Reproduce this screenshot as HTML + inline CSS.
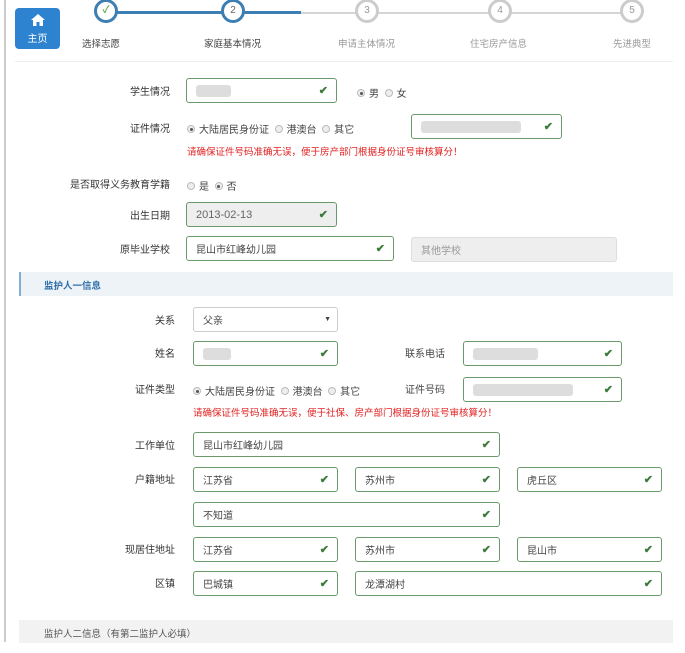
<!DOCTYPE html>
<html><head><meta charset="utf-8"><style>
*{box-sizing:border-box;margin:0;padding:0}
body{width:685px;height:653px;background:#fff;position:relative;overflow:hidden;font-family:"Liberation Sans","Noto Sans CJK SC",sans-serif;font-size:10px;color:#444}
.a{position:absolute;white-space:nowrap}
.lbl{position:absolute;text-align:right;width:150px;font-size:10px;color:#333}
.in{position:absolute;border:1px solid #6a9a6a;border-radius:3px;background:#fff;height:25px;padding-left:9px;display:flex;align-items:center;font-size:10px;color:#444}
.in.g{background:#eee}
.in .ck{position:absolute;right:8px;top:5px;color:#3c7a3c;font-size:11px;font-weight:bold}
.blur{display:inline-block;height:12px;background:#ddd;border-radius:3px}
.rd{display:inline-block;width:8px;height:8px;border:1px solid #bbb;border-radius:50%;background:#eee;vertical-align:middle;margin-right:4px;position:relative;top:-1px}
.rd.on::after{content:"";position:absolute;left:1.5px;top:1.5px;width:3px;height:3px;background:#555;border-radius:50%}
.red{color:#e02020;font-size:9.5px}
.step{position:absolute;width:24px;height:24px;border-radius:50%;border:3px solid #ccc;background:#fff;text-align:center;line-height:18px;font-size:10px;color:#999;top:-1px}
.sl{position:absolute;top:36px;font-size:9.5px;color:#999}
</style></head><body>
<div class="a" style="left:4px;top:0;width:2px;height:642px;background:#ccc"></div>
<div class="a" style="left:15px;top:8px;width:45px;height:41px;background:#2d83cf;border-radius:4px;color:#fff;text-align:center;font-size:10px">
<svg width="14" height="12" viewBox="0 0 14 12" style="margin-top:6px"><path d="M7 0 L14 6 L12 6 L12 12 L8.5 12 L8.5 8 L5.5 8 L5.5 12 L2 12 L2 6 L0 6 Z" fill="#fff"/></svg>
<div style="margin-top:1px">主页</div></div>
<div class="a" style="left:106px;top:11px;width:195px;height:3px;background:#3d7fb3"></div>
<div class="a" style="left:301px;top:12px;width:331px;height:2px;background:#d5d5d5"></div>
<div class="step" style="left:94px;border-color:#3d7fb3;color:#6ab04c;font-weight:bold">✓</div>
<div class="step" style="left:221px;border-color:#3d7fb3;color:#666">2</div>
<div class="step" style="left:355px">3</div>
<div class="step" style="left:488px">4</div>
<div class="step" style="left:620px">5</div>
<div class="sl" style="left:82px;color:#444">选择志愿</div>
<div class="sl" style="left:204px;color:#444">家庭基本情况</div>
<div class="sl" style="left:338px">申请主体情况</div>
<div class="sl" style="left:470px">住宅房产信息</div>
<div class="sl" style="left:613px">先进典型</div>
<div class="a" style="left:15px;top:61px;width:658px;height:1px;background:#eee"></div>

<div class="lbl" style="left:20px;top:83px">学生情况</div>
<div class="in" style="left:186px;top:78px;width:151px"><span class="blur" style="width:35px"></span><span class="ck">✔</span></div>
<div class="a" style="left:357px;top:85px"><span class="rd on"></span>男 &nbsp;<span class="rd"></span>女</div>
<div class="lbl" style="left:20px;top:120px">证件情况</div>
<div class="a" style="left:187px;top:121px"><span class="rd on"></span>大陆居民身份证 &nbsp;<span class="rd"></span>港澳台 &nbsp;<span class="rd"></span>其它</div>
<div class="in" style="left:411px;top:114px;width:151px"><span class="blur" style="width:100px"></span><span class="ck">✔</span></div>
<div class="a red" style="left:187px;top:144px">请确保证件号码准确无误，便于房产部门根据身份证号审核算分！</div>
<div class="lbl" style="left:20px;top:176px">是否取得义务教育学籍</div>
<div class="a" style="left:187px;top:178px"><span class="rd"></span>是 &nbsp;<span class="rd on"></span>否</div>
<div class="lbl" style="left:20px;top:207px">出生日期</div>
<div class="in g" style="left:186px;top:202px;width:151px;font-size:11px;color:#666">2013-02-13<span class="ck">✔</span></div>
<div class="lbl" style="left:20px;top:241px">原毕业学校</div>
<div class="in" style="left:186px;top:236px;width:208px">昆山市红峰幼儿园<span class="ck">✔</span></div>
<div class="in g" style="left:411px;top:237px;width:206px;border-color:#ddd;color:#999">其他学校</div>

<div class="a" style="left:19px;top:272px;width:654px;height:24px;background:#eef3f7;border-left:2px solid #7fb0d8"></div>
<div class="a" style="left:44px;top:278px;color:#2d6ea8;font-size:9.5px;font-weight:bold">监护人一信息</div>

<div class="lbl" style="left:25px;top:312px">关系</div>
<div class="in" style="left:193px;top:307px;width:145px;border-color:#ccc">父亲<span style="position:absolute;right:6px;top:8px;font-size:7px">▼</span></div>
<div class="lbl" style="left:25px;top:345px">姓名</div>
<div class="in" style="left:193px;top:341px;width:145px"><span class="blur" style="width:28px"></span><span class="ck">✔</span></div>
<div class="a" style="left:405px;top:345px">联系电话</div>
<div class="in" style="left:463px;top:341px;width:159px"><span class="blur" style="width:65px"></span><span class="ck">✔</span></div>
<div class="lbl" style="left:25px;top:381px">证件类型</div>
<div class="a" style="left:193px;top:383px"><span class="rd on"></span>大陆居民身份证 &nbsp;<span class="rd"></span>港澳台 &nbsp;<span class="rd"></span>其它</div>
<div class="a" style="left:405px;top:381px">证件号码</div>
<div class="in" style="left:463px;top:377px;width:159px"><span class="blur" style="width:100px"></span><span class="ck">✔</span></div>
<div class="a red" style="left:193px;top:405px">请确保证件号码准确无误，便于社保、房产部门根据身份证号审核算分！</div>
<div class="lbl" style="left:25px;top:437px">工作单位</div>
<div class="in" style="left:193px;top:432px;width:307px">昆山市红峰幼儿园<span class="ck">✔</span></div>
<div class="lbl" style="left:25px;top:471px">户籍地址</div>
<div class="in" style="left:193px;top:467px;width:145px">江苏省<span class="ck">✔</span></div>
<div class="in" style="left:355px;top:467px;width:145px">苏州市<span class="ck">✔</span></div>
<div class="in" style="left:517px;top:467px;width:145px">虎丘区<span class="ck">✔</span></div>
<div class="in" style="left:193px;top:502px;width:307px">不知道<span class="ck">✔</span></div>
<div class="lbl" style="left:25px;top:541px">现居住地址</div>
<div class="in" style="left:193px;top:537px;width:145px">江苏省<span class="ck">✔</span></div>
<div class="in" style="left:355px;top:537px;width:145px">苏州市<span class="ck">✔</span></div>
<div class="in" style="left:517px;top:537px;width:145px">昆山市<span class="ck">✔</span></div>
<div class="lbl" style="left:25px;top:575px">区镇</div>
<div class="in" style="left:193px;top:571px;width:145px">巴城镇<span class="ck">✔</span></div>
<div class="in" style="left:355px;top:571px;width:307px">龙潭湖村<span class="ck">✔</span></div>

<div class="a" style="left:19px;top:620px;width:654px;height:23px;background:#f2f2f2"></div>
<div class="a" style="left:44px;top:626px;color:#555;font-size:9.5px">监护人二信息（有第二监护人必填）</div>
</body></html>
